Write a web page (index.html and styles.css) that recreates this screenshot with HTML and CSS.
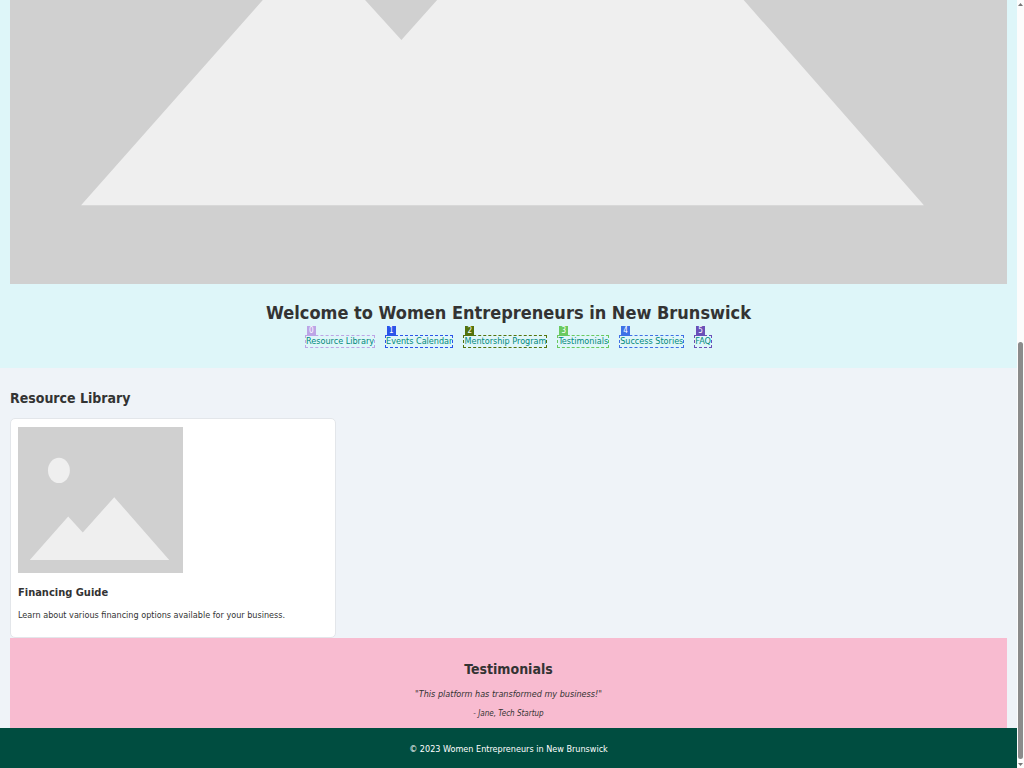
FILE: index.html
```html
<!DOCTYPE html>
<html lang="en">
<head>
<meta charset="utf-8">
<title>Women Entrepreneurs in New Brunswick</title>
<link rel="stylesheet" href="styles.css">
</head>
<body>
<div class="viewport">
  <div class="page">
    <header class="hero">
      <svg class="hero-image" viewBox="0 596 996 284" role="img" aria-label="Placeholder landscape">
        <rect width="996" height="880" fill="#d0d0d0"/>
        <ellipse cx="247" cy="262" rx="66" ry="76" fill="#efefef"/>
        <path d="M71 801 303 539 391 636 581 423 913 801Z" fill="#efefef"/>
      </svg>
      <h1 class="hero-title">Welcome to Women Entrepreneurs in New Brunswick</h1>
      <nav class="nav">
        <a class="nav-link mark-lilac" href="#resources">Resource Library<span class="tag">0</span></a>
        <a class="nav-link mark-blue" href="#events">Events Calendar<span class="tag">1</span></a>
        <a class="nav-link mark-olive" href="#mentorship">Mentorship Program<span class="tag">2</span></a>
        <a class="nav-link mark-green" href="#testimonials">Testimonials<span class="tag">3</span></a>
        <a class="nav-link mark-azure" href="#stories">Success Stories<span class="tag">4</span></a>
        <a class="nav-link mark-purple" href="#faq">FAQ<span class="tag">5</span></a>
      </nav>
    </header>
    <main class="content">
      <section id="resources">
        <h2 class="section-title">Resource Library</h2>
        <div class="cards">
          <article class="card">
            <svg class="card-image" viewBox="0 0 996 880" preserveAspectRatio="none" role="img" aria-label="Placeholder landscape">
              <rect width="996" height="880" fill="#d0d0d0"/>
              <ellipse cx="247" cy="262" rx="66" ry="76" fill="#efefef"/>
              <path d="M71 801 303 539 391 636 581 423 913 801Z" fill="#efefef"/>
            </svg>
            <h3 class="card-title">Financing Guide</h3>
            <p class="card-text">Learn about various financing options available for your business.</p>
          </article>
        </div>
      </section>
      <section class="testimonials" id="testimonials">
        <h2 class="section-title">Testimonials</h2>
        <blockquote class="quote">"This platform has transformed my business!"</blockquote>
        <cite class="author">- Jane, Tech Startup</cite>
      </section>
    </main>
    <footer class="footer">© 2023 Women Entrepreneurs in New Brunswick</footer>
  </div>
  <div class="scrollbar" aria-hidden="true">
    <svg class="arrow" viewBox="0 0 14 16"><path d="M7 6 12 12H2Z" fill="#777"/></svg>
    <div class="track"><div class="thumb"></div></div>
    <svg class="arrow" viewBox="0 0 14 16"><path d="M7 10 12 4H2Z" fill="#777"/></svg>
  </div>
</div>
</body>
</html>
```
FILE: styles.css
```css
* { box-sizing: border-box; }

body {
  margin: 0;
  font-family: "DejaVu Sans Condensed", "DejaVu Sans", sans-serif;
  font-size: 9px;
  line-height: 14px;
  color: #333;
  background: #eff3f8;
}

h1, h2, h3, p, blockquote { margin: 0; }

.viewport {
  display: grid;
  grid-template-columns: 1fr 7px;
  min-height: 100vh;
}

.page { display: flex; flex-direction: column; }

.hero {
  padding: 0 10px 20px;
  background: #def6f9;
  text-align: center;
}

.hero-image { display: block; width: 100%; }

.hero-title {
  padding-top: 17px;
  font-size: 18px;
  line-height: 24px;
}

.nav {
  display: flex;
  justify-content: center;
  gap: 10px;
  padding-top: 10px;
}

.nav-link {
  position: relative;
  border: 1px dashed var(--mark);
  line-height: 11px;
  color: #00897b;
  text-decoration: none;
}

.tag {
  position: absolute;
  left: 1px;
  bottom: 100%;
  padding: 0 2px;
  font-size: 8px;
  line-height: 10px;
  color: #fff;
  background: var(--mark);
}

.mark-lilac { --mark: #bca5e6; }
.mark-blue { --mark: #2b55ea; }
.mark-olive { --mark: #53730c; }
.mark-green { --mark: #69ca60; }
.mark-azure { --mark: #3f70e6; }
.mark-purple { --mark: #6a50b8; }

.content { flex: 1; padding: 20px 10px 0; }

.section-title { font-size: 14px; line-height: 20px; }

.cards {
  display: grid;
  grid-template-columns: repeat(3, 1fr);
  gap: 10px;
  padding-top: 10px;
}

.card {
  padding: 8px 7px 15px;
  border: 1px solid #e3e6ea;
  border-radius: 5px;
  background: #fff;
}

.card-image { display: block; width: 165px; height: 146px; }

.card-title { padding: 12px 0 7px; font-size: 11px; line-height: 16px; }

.testimonials {
  padding: 21px 0 7px;
  background: #f8bbd0;
  text-align: center;
}

.quote { padding: 8px 0 6px; font-style: italic; }

.author { display: block; font-size: 8px; }

.footer {
  padding: 14px 13px 13px;
  background: #004d40;
  color: #fff;
  text-align: center;
}

.scrollbar {
  display: flex;
  flex-direction: column;
  background: #fcfcfc;
}

.arrow { display: block; width: 7px; height: 8px; }

.track {
  flex: 1;
  display: grid;
  grid-template-rows: 4fr 5fr;
  padding: 0 1px 2px;
}

.thumb { grid-row: 2; border-radius: 3px; background: #8b8b8b; }
```
